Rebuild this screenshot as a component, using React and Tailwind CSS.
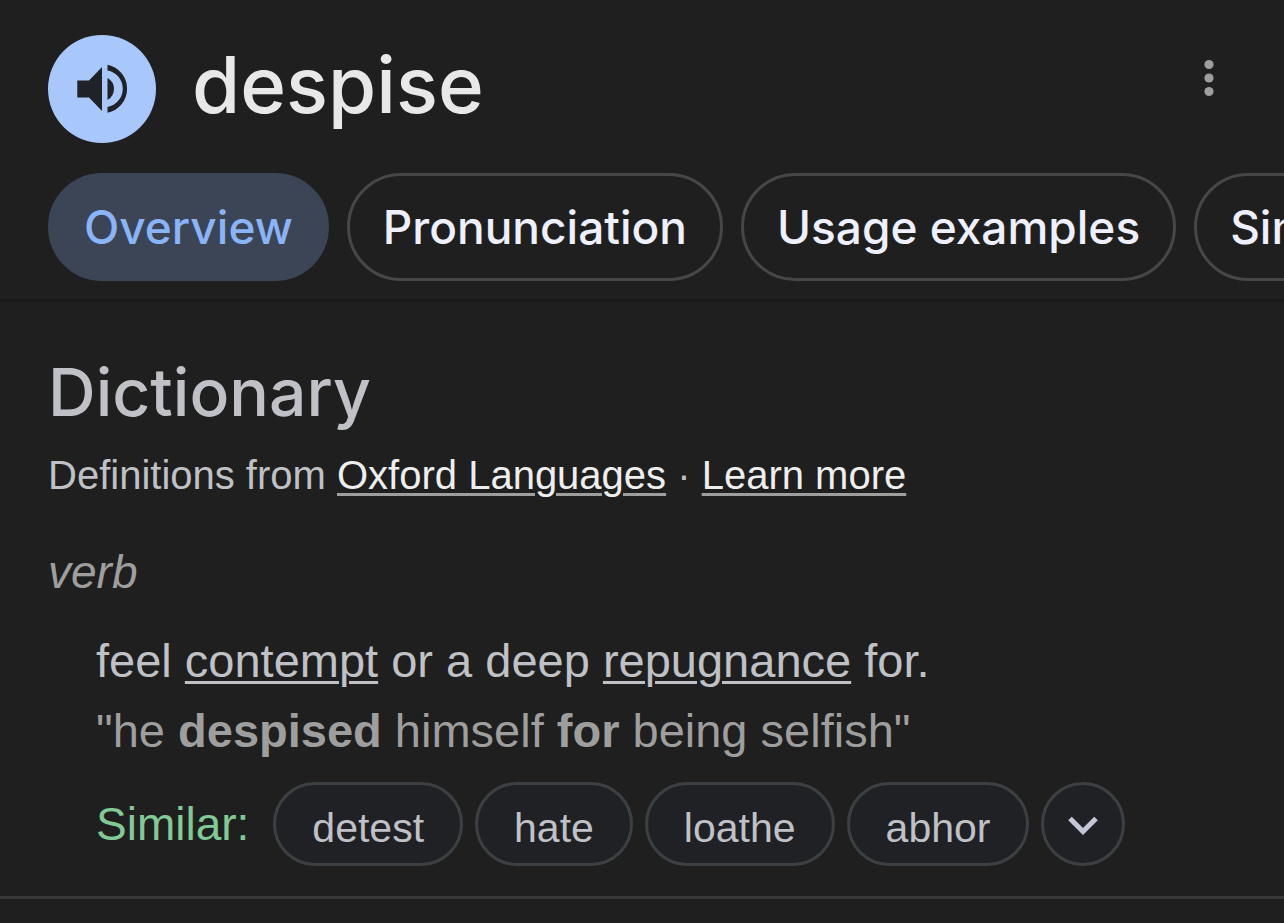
const tabs = ["Overview", "Pronunciation", "Usage examples", "Similar and opposite words"];
const synonyms = ["detest", "hate", "loathe", "abhor"];

function SpeakerIcon() {
  return (
    <svg viewBox="0 0 54 54" className="size-[54px]" fill="#1f2226" aria-hidden="true">
      <path d="M2.300 18.500h11.700L27 5v44L14 35.500H2.300z" />
      <path d="M32.500 16a12.600 12.600 0 0 1 0 22z" />
      <path d="M32.500 2.700a24.500 24.500 0 0 1 0 48v-5.700a18.600 18.600 0 0 0 0-36.600z" />
    </svg>
  );
}

function Tab({ label, active }) {
  return (
    <button
      type="button"
      role="tab"
      aria-selected={active}
      className={
        active
          ? "h-[108px] shrink-0 rounded-full border-3 border-[#3b4556] bg-[#3b4556] px-[33px] text-[#8ab4f8]"
          : "h-[108px] shrink-0 rounded-full border-3 border-[#474747] px-[33px] text-[#eef0ff]"
      }
    >
      {label}
    </button>
  );
}

function Term({ children }) {
  return (
    <a href="#" className="underline decoration-3 underline-offset-4">
      {children}
    </a>
  );
}

function SourceLink({ children }) {
  return (
    <a href="#" className="text-[#eeeeee] underline decoration-[#9e9e9e] decoration-3 underline-offset-4">
      {children}
    </a>
  );
}

export default function App() {
  return (
    <main className="min-h-screen bg-[#1f1f1f] font-['Liberation_Sans',Arial,sans-serif] text-[#bfc1c6]">
      <header className="border-b-3 border-[#191919] pb-[18px] font-['Inter',sans-serif] font-medium">
        <div className="flex items-center pt-[35px] pr-12 pl-12">
          <button
            type="button"
            aria-label="Listen to pronunciation"
            className="flex size-[108px] shrink-0 items-center justify-center rounded-full bg-[#a8c7fa]"
          >
            <SpeakerIcon />
          </button>
          <h1 className="ml-9 flex-1 pb-2 text-[78px] leading-[96px] text-[#e8e8e8]">despise</h1>
          <button type="button" aria-label="More options" className="mb-[22px] flex w-[54px] justify-center">
            <svg viewBox="0 0 10 38" className="h-[38px] w-[10px]" fill="#9e9e9e" aria-hidden="true">
              <circle cx="5" cy="5.500" r="4.600" />
              <circle cx="5" cy="19" r="4.600" />
              <circle cx="5" cy="32.500" r="4.600" />
            </svg>
          </button>
        </div>
        <div
          role="tablist"
          className="mt-[30px] flex gap-[18px] overflow-x-auto pl-12 text-[46px] whitespace-nowrap [scrollbar-width:none]"
        >
          {tabs.map((label, i) => (
            <Tab key={label} label={label} active={i === 0} />
          ))}
        </div>
      </header>

      <section className="border-b-3 border-[#383838] px-12 pt-[50px] pb-[30px]">
        <h2 className="font-['Inter',sans-serif] text-[66px] leading-[80px] font-medium">Dictionary</h2>
        <p className="mt-4 text-[40px] leading-[54px]">
          Definitions from <SourceLink>Oxford Languages</SourceLink>
          {" · "}
          <SourceLink>Learn more</SourceLink>
        </p>
        <p className="mt-10 text-[46px] leading-[60px] text-[#9e9e9e] italic">verb</p>
        <div className="pl-12">
          <p className="mt-6 text-[47px] leading-[70px]">
            feel <Term>contempt</Term> or a deep <Term>repugnance</Term> for.
          </p>
          <p className="text-[47px] leading-[70px] text-[#9e9e9e]">
            "he <b>despised</b> himself <b>for</b> being selfish"
          </p>
          <div className="mt-4 flex items-center gap-3">
            <span className="mr-3 text-[46px] text-[#81c995]">Similar:</span>
            {synonyms.map((word) => (
              <button
                key={word}
                type="button"
                className="h-[84px] rounded-full border-3 border-[#3c4043] bg-[#202124] px-9 pt-2 text-[41px] leading-[60px]"
              >
                {word}
              </button>
            ))}
            <button
              type="button"
              aria-label="Show more similar words"
              className="flex size-[84px] items-center justify-center rounded-full border-3 border-[#3c4043] bg-[#202124] pt-1"
            >
              <svg viewBox="0 0 30 20" className="h-5 w-[30px]" fill="none" stroke="#c4c7d8" strokeWidth="5" aria-hidden="true">
                <path d="M2 2.500 15 15.500 28 2.500" />
              </svg>
            </button>
          </div>
        </div>
      </section>
    </main>
  );
}
